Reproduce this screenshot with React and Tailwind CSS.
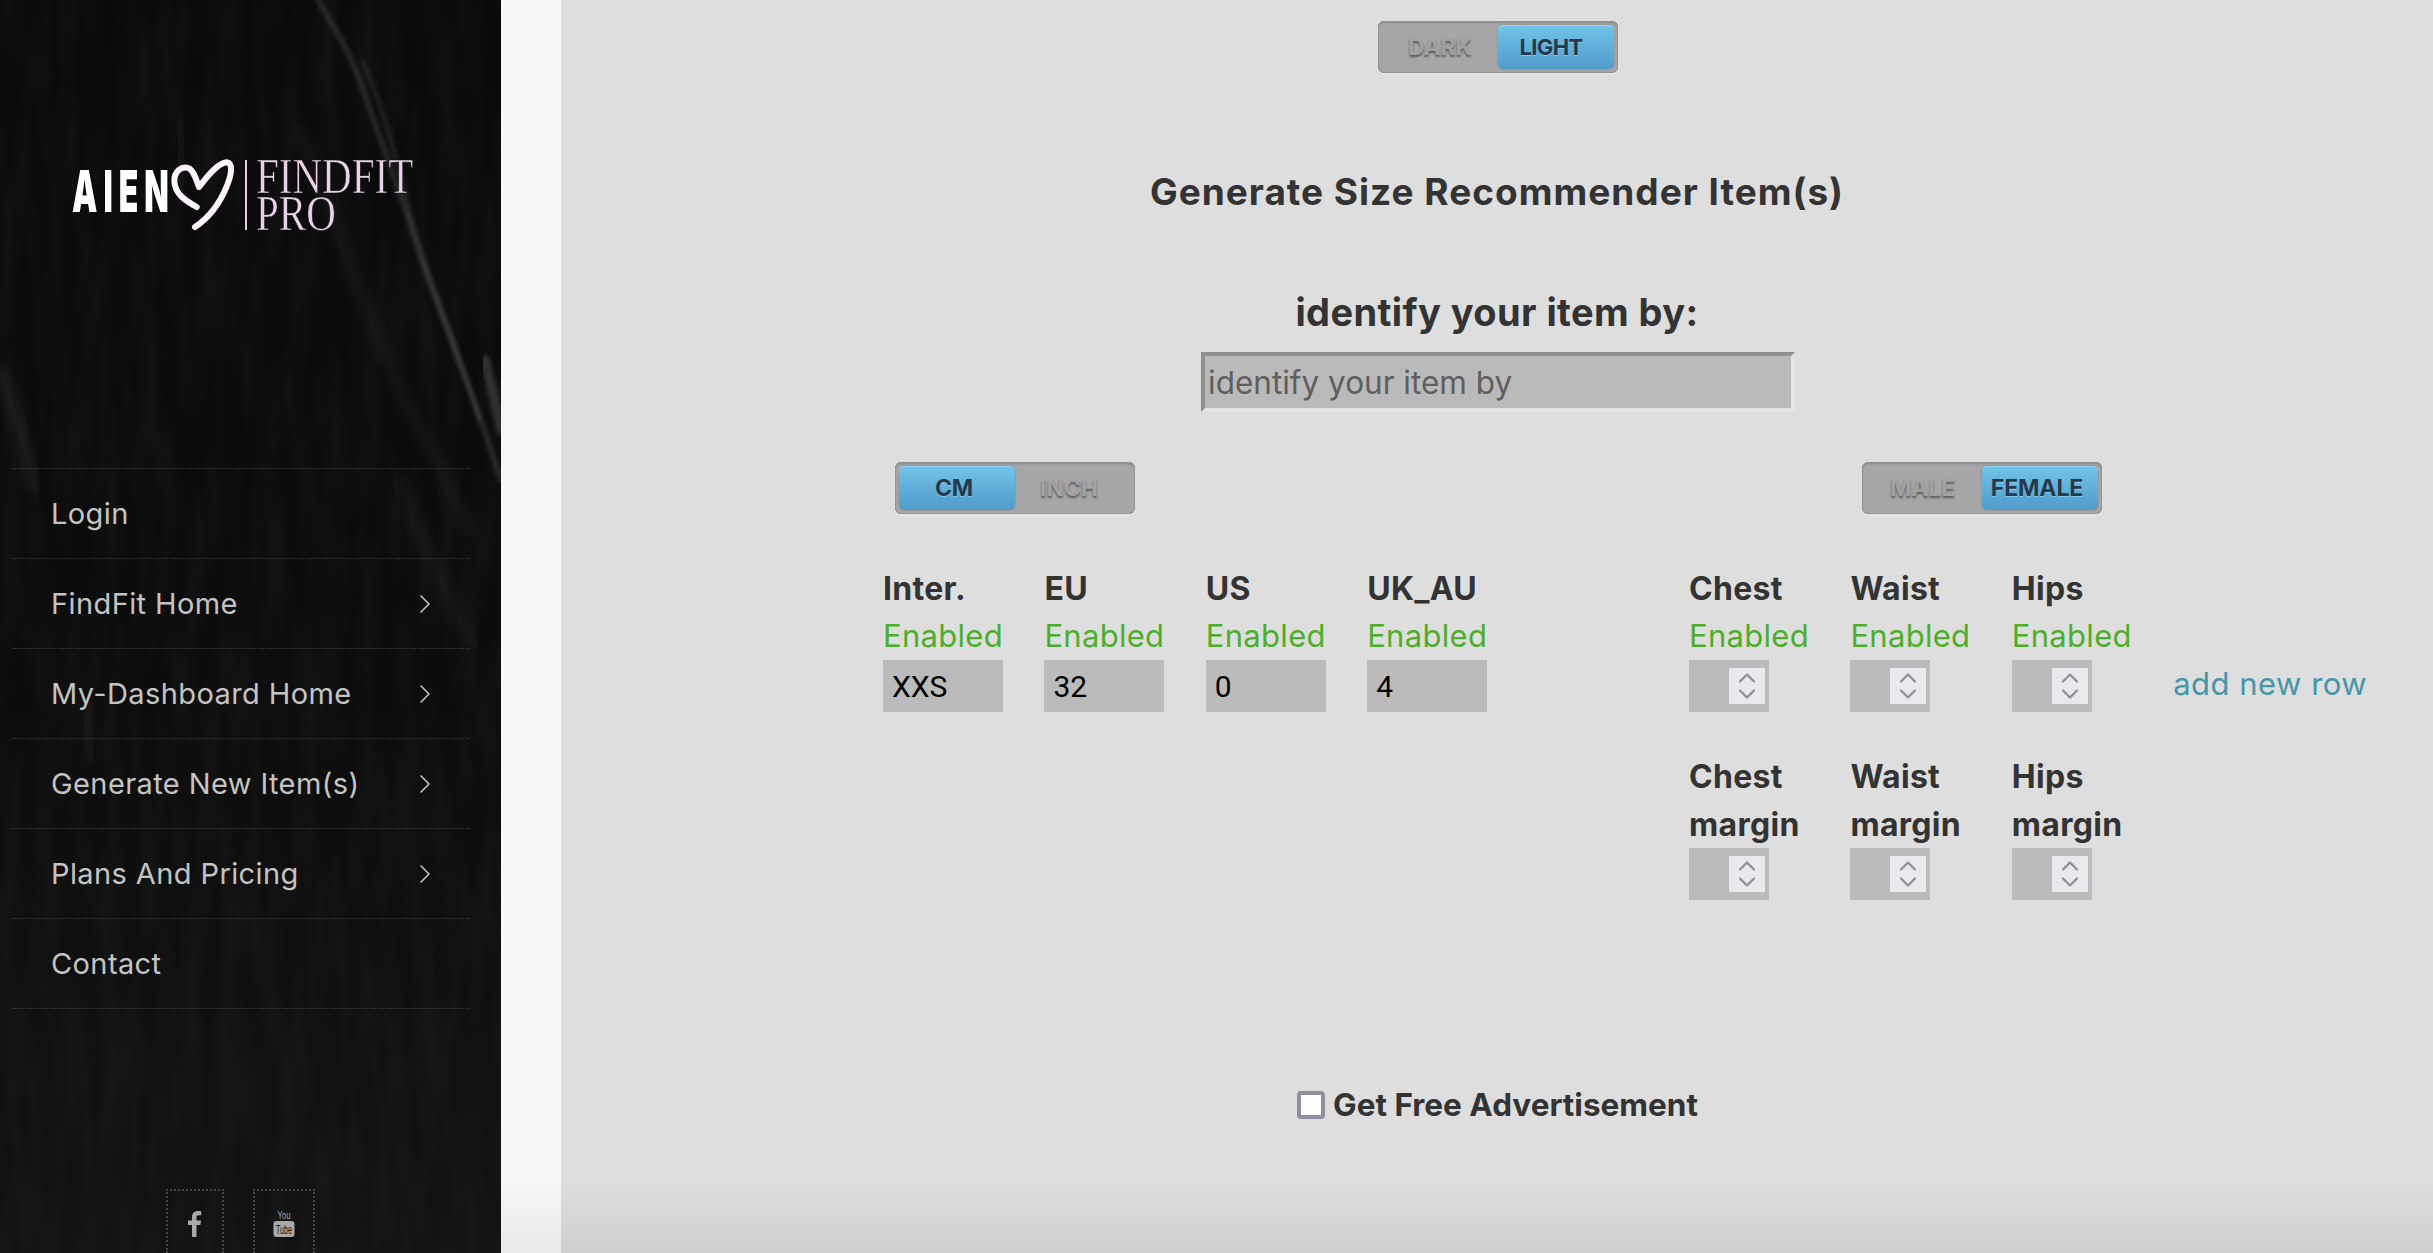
import React from "react";
import { ChevronRight, ChevronUp, ChevronDown } from "lucide-react";

const inter = "font-['Inter','Liberation_Sans',sans-serif]";

function Texture() {
  return (
    <svg className="absolute inset-0 w-full h-full" viewBox="0 0 501 1253" preserveAspectRatio="none" aria-hidden="true">
      <defs>
        <filter id="grain" x="0" y="0" width="100%" height="100%">
          <feTurbulence type="fractalNoise" baseFrequency="0.05 0.008" numOctaves="2" seed="7" />
          <feColorMatrix type="matrix" values="0 0 0 0 1  0 0 0 0 1  0 0 0 0 1  0.6 0 0 0 -0.2" />
        </filter>
        <linearGradient id="fade" x1="0" y1="0" x2="0" y2="1">
          <stop offset="0" stopColor="#0a0a0a" />
          <stop offset="0.55" stopColor="#0c0c0c" />
          <stop offset="1" stopColor="#131313" />
        </linearGradient>
        <filter id="b2"><feGaussianBlur stdDeviation="2" /></filter>
        <filter id="b6"><feGaussianBlur stdDeviation="6" /></filter>
      </defs>
      <rect width="501" height="1253" fill="url(#fade)" />
      <rect width="501" height="1253" filter="url(#grain)" opacity="0.1" />
      <g fill="none" stroke="#ffffff" strokeLinecap="round">
        <path d="M318 0C335 30 350 50 365 95S400 190 415 240S455 340 501 480" strokeWidth="5" opacity="0.13" filter="url(#b2)" />
        <path d="M362 60C380 100 395 150 408 205S450 330 480 420" strokeWidth="4" opacity="0.1" filter="url(#b2)" />
        <path d="M300 130C320 190 345 250 375 330S430 440 470 530" strokeWidth="12" opacity="0.04" filter="url(#b6)" />
        <path d="M0 370C10 400 25 440 35 490" strokeWidth="10" opacity="0.08" filter="url(#b6)" />
        <path d="M485 360C490 380 495 400 501 430" strokeWidth="10" opacity="0.14" filter="url(#b2)" />
        <path d="M180 120C185 150 182 175 178 200" strokeWidth="8" opacity="0.06" filter="url(#b6)" />
        <path d="M400 480C420 540 440 580 470 640" strokeWidth="14" opacity="0.04" filter="url(#b6)" />
        <path d="M85 700C88 720 90 735 92 760" strokeWidth="8" opacity="0.06" filter="url(#b6)" />
      </g>
    </svg>
  );
}

function Logo() {
  return (
    <div className="flex items-start pl-[72px] pt-[158px] h-[468px]">
      <div className="w-[98px] h-[42px] mt-[12px] shrink-0">
        <span className={`block w-[98px] text-white ${inter} font-black text-[58px] leading-[42px] tracking-[11px] origin-left [transform:scaleX(0.55)]`}>AIEN</span>
      </div>
      <svg width="65" height="74" viewBox="510 175 195 222" className="shrink-0" aria-hidden="true">
        <path d="M590 322C560 305 525 285 523 245C522 215 545 198 565 205C582 212 590 245 597 262C615 240 650 190 680 188C700 190 695 225 680 260C660 310 625 355 585 382" fill="none" stroke="#fdf3fd" strokeWidth="18" strokeLinecap="round" strokeLinejoin="round" />
      </svg>
      <div className="w-[2px] h-[70px] bg-[#e6cfe6] mt-[2px] ml-[10px]" />
      <div className="ml-[9px] mt-[0px] text-[#e9d2ea] font-['Liberation_Serif',serif] font-normal text-[50px] leading-[37px] origin-left [transform:scaleX(0.82)] [-webkit-text-stroke:0.6px_#0b0b0b] whitespace-nowrap">
        FINDFIT<br />PRO
      </div>
    </div>
  );
}

const menu = [
  ["Login", false],
  ["FindFit Home", true],
  ["My-Dashboard Home", true],
  ["Generate New Item(s)", true],
  ["Plans And Pricing", true],
  ["Contact", false],
];

function Sidebar() {
  return (
    <aside className="relative w-[501px] shrink-0 h-full overflow-hidden">
      <Texture />
      <div className="relative">
        <Logo />
        <nav className="mx-[12px] w-[458px] border-t border-dotted border-[#3d3d3d]">
          {menu.map(([label, chev]) => (
            <div key={label} className={`flex items-center justify-between h-[90px] border-b border-dotted border-[#3d3d3d] pl-[39px] pr-[29px] ${inter} text-[#c4c4c4] text-[29px] tracking-[0.4px]`}>
              <span>{label}</span>
              {chev && <ChevronRight size={32} strokeWidth={1.2} className="text-[#c4c4c4]" />}
            </div>
          ))}
        </nav>
        <div className="flex pl-[166px] gap-[29px] mt-[180px]">
          <div className="w-[58px] h-[64px] border-2 border-dotted border-b-0 border-[#444] flex justify-center pt-[20px]">
            <svg width="14" height="26" viewBox="0 0 14 26" aria-hidden="true">
              <path d="M4 26V14H0V9.5h4V6.2C4 2.2 6.3 0 9.8 0c1.6 0 3 .1 3.4.2v4.1h-2.4C8.9 4.3 8.5 5.2 8.5 6.6v2.9h4.5l-.6 4.5H8.5v12z" fill="#a9a9a9" />
            </svg>
          </div>
          <div className="w-[62px] h-[64px] border-2 border-dotted border-b-0 border-[#444] flex justify-center pt-[16px]">
            <svg width="22" height="32" viewBox="0 -3 22 32" aria-hidden="true">
              <text x="11" y="9" textAnchor="middle" fontFamily="Liberation Sans" fontSize="11" fill="#a9a9a9" textLength="13" lengthAdjust="spacingAndGlyphs">You</text>
              <rect x="0.5" y="11" width="21" height="16" rx="3" fill="#a9a9a9" />
              <text x="11" y="24" textAnchor="middle" fontFamily="Liberation Sans" fontSize="13" fill="#161616" textLength="16" lengthAdjust="spacingAndGlyphs">Tube</text>
            </svg>
          </div>
        </div>
      </div>
    </aside>
  );
}

function Toggle({ left, right, active, leftClass = "", rightClass = "" }) {
  const on = "flex items-center justify-center w-[116px] h-[44px] rounded-[5px] bg-[linear-gradient(to_bottom,#71c4ea,#519bcb)] shadow-[inset_0_1px_0_#8fd4f2,0_0_2px_rgba(0,0,0,0.25)] text-[#26394a] [text-shadow:0_1px_0_rgba(140,210,240,0.8)]";
  const off = "flex items-center justify-center w-[116px] h-[44px] text-[#a2a2a2] [text-shadow:0_2px_2px_rgba(70,70,70,0.75)]";
  return (
    <div className={`flex w-[240px] h-[52px] p-[4px] rounded-[6px] bg-[#a6a6a6] shadow-[inset_0_0_0_1px_#929292,inset_0_2px_2px_rgba(0,0,0,0.18),0_2px_2px_rgba(255,255,255,0.25)] ${inter} font-bold text-[23px] tracking-[-0.1px]`}>
      <div className={`${active === 0 ? on : off} ${leftClass}`}>{left}</div>
      <div className={`${active === 1 ? on : off} ${rightClass}`}>{right}</div>
    </div>
  );
}

const label = `${inter} font-bold text-[32px] leading-[48px] text-[#333] tracking-[0.3px] whitespace-nowrap translate-y-[1px]`;
const enabled = `${inter} font-normal text-[31px] leading-[48px] text-[#4dae2c] tracking-[0.3px] whitespace-nowrap`;

function TextCell({ name, value }) {
  return (
    <div className="w-[120px]">
      <div className={label}>{name}</div>
      <div className={enabled}>Enabled</div>
      <input readOnly value={value} className="block w-[120px] h-[52px] bg-[#bbbbbb] pl-[9px] text-black font-['Roboto',sans-serif] text-[30px] outline-none" />
    </div>
  );
}

function Stepper() {
  return (
    <div className="w-[80px] h-[52px] bg-[#bbbbbb] flex items-center justify-end pr-[4px]">
      <div className="w-[36px] h-[36px] bg-[#e9e9ed] flex flex-col items-center justify-center text-[#8f8f9d]">
        <ChevronUp size={28} strokeWidth={2} className="-mb-[6px] shrink-0" />
        <ChevronDown size={28} strokeWidth={2} className="-mt-[6px] shrink-0" />
      </div>
    </div>
  );
}

function NumCell({ name, sub, status }) {
  return (
    <div className="w-[120px]">
      <div className={label}>{name}</div>
      {sub && <div className={label}>{sub}</div>}
      {status && <div className={enabled}>Enabled</div>}
      <Stepper />
    </div>
  );
}

export default function App() {
  return (
    <div className="flex w-full h-[1253px] overflow-hidden">
      <Sidebar />
      <div className="w-[60px] shrink-0 bg-[linear-gradient(to_bottom,#f7f7f7_94%,#e8e8e8_100%)]" />
      <main className="flex-1 flex flex-col bg-[linear-gradient(to_bottom,#dedede_94%,#cfcfcf_100%)]">
        <div className="flex justify-center pt-[21px] pl-[2px]">
          <Toggle left="DARK" right="LIGHT" active={1} rightClass="pr-[10px] text-[22px] tracking-[-0.6px]" />
        </div>
        <h1 className={`text-center mt-[94px] ${inter} font-bold text-[37px] tracking-[1px] leading-[48px] text-[#333] translate-y-[1px]`}>Generate Size Recommender Item(s)</h1>
        <h2 className={`text-center mt-[73px] ${inter} font-bold text-[38px] tracking-[0.4px] leading-[48px] text-[#333]`}>identify your item by:</h2>
        <div className="flex justify-center mt-[16px] pl-[2px]">
          <input
            readOnly
            placeholder="identify your item by"
            className={`block w-[594px] h-[60px] bg-[#bababa] border-[4px] border-t-[#8f8f8f] border-l-[#8f8f8f] border-r-[#e3e3e3] border-b-[#e3e3e3] pl-[3px] ${inter} text-[31.5px] text-[#5f5f5f] placeholder:text-[#5f5f5f] outline-none`}
          />
        </div>
        <div className="flex mt-[50px] pl-[322px]">
          <div className="w-[806px]">
            <div className="pl-[12px]"><Toggle left="CM" right="INCH" active={0} leftClass="pr-[6px]" rightClass="pr-[8px]" /></div>
            <div className="flex gap-[41.4px] mt-[50px]">
              <TextCell name="Inter." value="XXS" />
              <TextCell name="EU" value="32" />
              <TextCell name="US" value="0" />
              <TextCell name="UK_AU" value="4" />
            </div>
          </div>
          <div>
            <div className="pl-[173px]"><Toggle left="MALE" right="FEMALE" active={1} leftClass="pr-[3px]" rightClass="pr-[6px]" /></div>
            <div className="flex gap-[41.4px] mt-[50px]">
              <NumCell name="Chest" status />
              <NumCell name="Waist" status />
              <NumCell name="Hips" status />
              <div className={`pt-[96px] ${inter} text-[31px] tracking-[0.5px] leading-[48px] text-[#4596a8] whitespace-nowrap`}>add new row</div>
            </div>
            <div className="flex gap-[41.4px] mt-[40px]">
              <NumCell name="Chest" sub="margin" />
              <NumCell name="Waist" sub="margin" />
              <NumCell name="Hips" sub="margin" />
            </div>
          </div>
        </div>
        <div className="flex justify-center items-center mt-[181px] h-[48px] pl-[1px]">
          <span className="block w-[28px] h-[28px] bg-white border-[4px] border-[#8f8f9d] rounded-[4px] mr-[8px]" />
          <span className={`${inter} font-bold text-[31.5px] text-[#333] whitespace-nowrap`}>Get Free Advertisement</span>
        </div>
      </main>
    </div>
  );
}
